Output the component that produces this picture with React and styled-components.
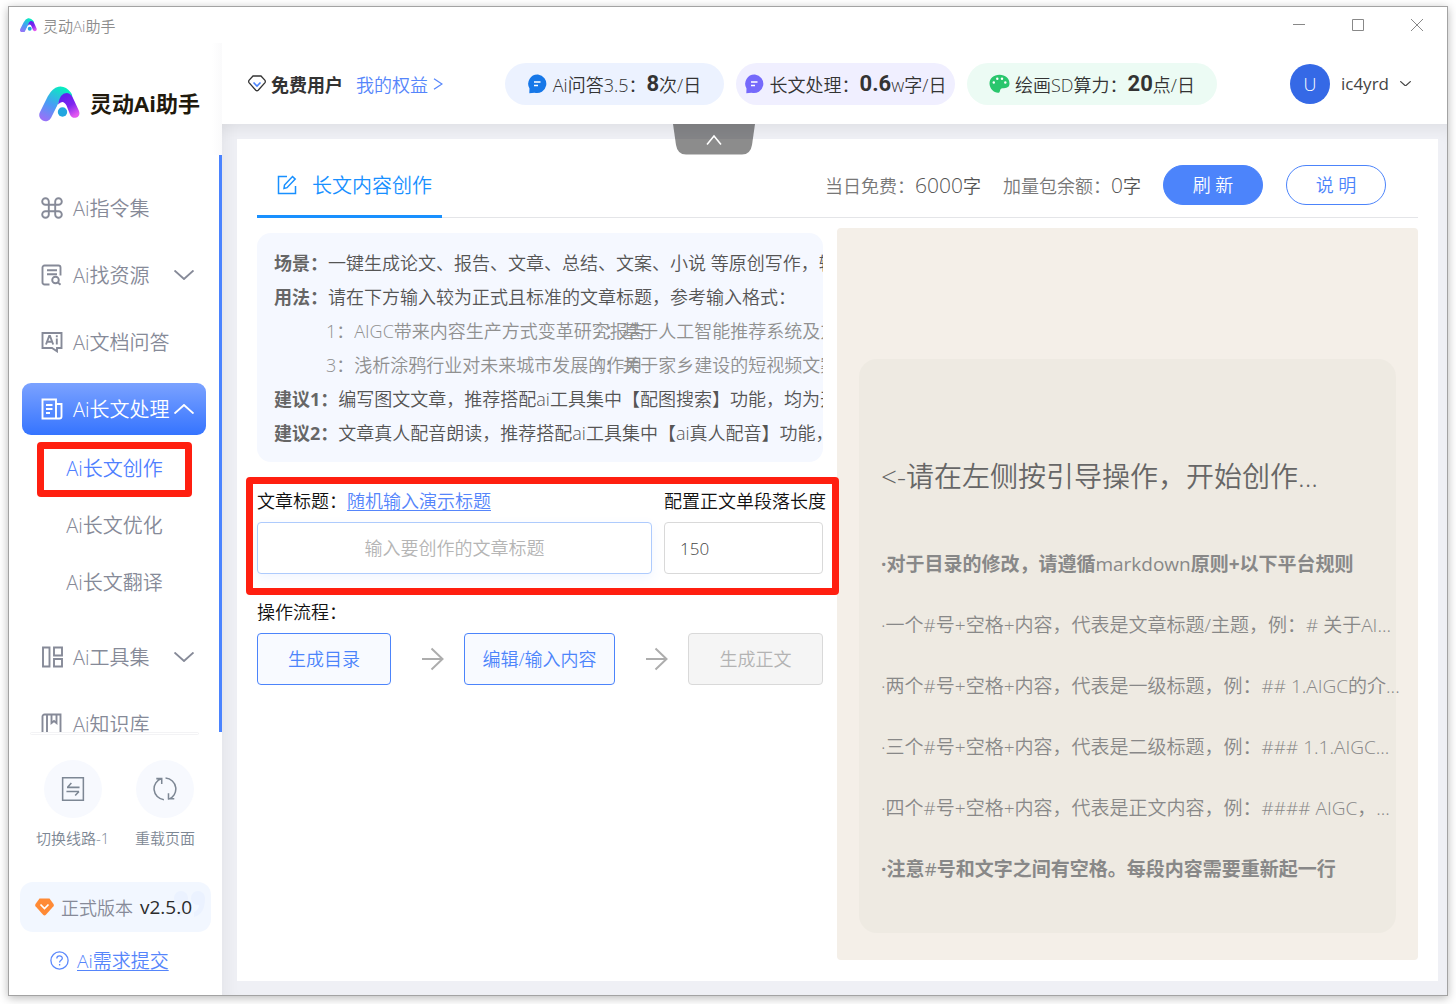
import React, { useState } from "react";
import styled, { createGlobalStyle, css } from "styled-components";

const GlobalStyle = createGlobalStyle`
  * { box-sizing: border-box; }
  body {
    margin: 0;
    background: #fff;
    color: #333;
    font-family: "Open Sans", "Noto Sans CJK SC", sans-serif;
    font-size: 18px;
    font-weight: 350;
  }
  button, input { font: inherit; color: inherit; }
  button { cursor: pointer; padding: 0; border: 0; background: none; white-space: nowrap; }
  p, h1, h2, ul { margin: 0; padding: 0; }
  ul { list-style: none; }
`

const Desktop = styled.div`
  min-height: 100vh;
  padding: 6px 8px 8px;
  display: flex;
`

const Window = styled.div`
  flex: 1;
  min-width: 0;
  display: flex;
  flex-direction: column;
  background: #fff;
  border: 1px solid #a3a3a3;
  box-shadow: 0 2px 9px rgba(0, 0, 0, 0.28);
`

/* title bar */
const TitleBar = styled.header`
  height: 36px;
  padding: 0 23px 0 11px;
  display: flex;
  align-items: center;
  justify-content: space-between;
  color: #8c8c8c;
  font-size: 15px;
`
const TitleName = styled.div`
  display: flex;
  align-items: center;
  gap: 6px;
`
const WindowButtons = styled.div`
  display: flex;
  gap: 44px;
`
const WindowButton = styled.button`
  width: 15px;
  height: 15px;
  display: flex;
  align-items: center;
  justify-content: center;
`

const Columns = styled.div`
  flex: 1;
  display: flex;
`

/* sidebar */
const Sidebar = styled.aside`
  width: 213px;
  flex: none;
  display: flex;
  flex-direction: column;
  color: #868a98;
`
const Brand = styled.div`
  height: 112px;
  padding: 10px 0 0 30px;
  display: flex;
  align-items: center;
  gap: 10px;
  background: linear-gradient(to left, #fafafb, #fff 10px);
`
const BrandName = styled.h1`
  color: #21190c;
  font-size: 22px;
  font-weight: 700;
  line-height: 28px;
  padding-bottom: 2px;
  white-space: nowrap;
`
const Menu = styled.nav`
  height: 577px;
  padding: 27px 13px 0;
  overflow: hidden;
  border-right: 3px solid #4a83ff;
  display: flex;
  flex-direction: column;
  gap: 15px;
`
const MenuItem = styled.button`
  width: 184px;
  height: 52px;
  flex: none;
  padding: 0 12px 0 19px;
  display: flex;
  align-items: center;
  border-radius: 9px;
  font-size: 20px;
  text-align: left;
  color: ${props => (props.$active ? "#fff" : "#868a98")};
  background: ${props => (props.$active ? "linear-gradient(#7ba2ff, #3574ff)" : "none")};

  span { flex: 1; margin-left: 10px; padding-bottom: 2px; }
  svg { flex: none; }
`
const SubMenu = styled.div`
  display: flex;
  flex-direction: column;
  padding: 4px 0 6px 15px;
`
const SubItem = styled.button`
  position: relative;
  width: 155px;
  height: 57px;
  font-size: 20px;
  color: ${props => (props.$marked ? "#4f80ff" : "#868a98")};

  ${props => props.$marked && css`
    &::after {
      content: "";
      position: absolute;
      inset: 3px 0 -1px;
      border: 7px solid #ff1f10;
      border-radius: 4px;
    }
  `}
`
const MenuLine = styled.div`
  height: 3px;
  margin: 0 23px 0 21px;
  border: 1px solid #f3f3f5;
  border-radius: 2px;
`
const Tools = styled.div`
  display: flex;
  justify-content: space-between;
  padding: 25px 27px 0;
`
const Tool = styled.button`
  display: flex;
  flex-direction: column;
  align-items: center;
  gap: 9px;
  font-size: 15px;
  line-height: 22px;
  color: #7d8794;
`
const ToolCircle = styled.span`
  width: 58px;
  height: 58px;
  border-radius: 50%;
  background: #f7f9fe;
  display: flex;
  align-items: center;
  justify-content: center;
`
const Version = styled.div`
  height: 50px;
  margin: 33px 11px 0 11px;
  padding: 0 15px;
  display: flex;
  align-items: center;
  gap: 7px;
  border-radius: 13px;
  position: relative;
  background: #f2f7ff;
  white-space: nowrap;

  b { color: #2b2b2b; font-weight: 500; font-size: 19px; position: relative; }
`
const Quote = styled.svg`
  position: absolute;
  right: 6px;
  top: 9px;
`
const Feedback = styled.div`
  height: 58px;
  padding: 0 0 2px 41px;
  display: flex;
  align-items: center;
  gap: 8px;
  color: #5b88fb;
  font-size: 19px;
`
const Link = styled.a`
  color: #5585fb;
  text-decoration: ${props => (props.$plain ? "none" : "underline")};
  text-underline-offset: 2px;
`

/* top bar */
const Page = styled.div`
  flex: 1;
  min-width: 0;
  display: flex;
  flex-direction: column;
`
const TopBar = styled.div`
  height: 81px;
  padding: 0 36px 0 26px;
  display: flex;
  align-items: center;
  white-space: nowrap;
`
const Plan = styled.div`
  width: 257px;
  display: flex;
  align-items: center;
  gap: 5px;

  b { font-weight: 700; margin-right: 8px; }
  a { display: flex; align-items: center; gap: 5px; }
`
const Pills = styled.div`
  display: flex;
  gap: 12px;
`
const Pill = styled.div`
  width: ${props => props.$width}px;
  height: 42px;
  display: flex;
  align-items: center;
  justify-content: center;
  border-radius: 21px;
  background: ${props => props.$color};

  svg { flex: none; margin-right: 5px; }
  b {
    font-family: Roboto, sans-serif;
    font-size: 22px;
    font-weight: 700;
  }
`
const User = styled.button`
  margin-left: auto;
  display: flex;
  align-items: center;
  gap: 11px;
  color: #444;
`
const Avatar = styled.span`
  width: 40px;
  height: 40px;
  border-radius: 50%;
  background: #3569e6;
  color: #fff;
  line-height: 40px;
`
const UserName = styled.span`
  font-size: 17px;
  font-weight: 400;
`

/* work area */
const Work = styled.main`
  position: relative;
  flex: 1;
  display: flex;
  padding: 15px 9px 14px 15px;
  background: #eff0f5;
  box-shadow: inset 0 14px 14px -8px rgba(0, 0, 0, 0.06), inset 14px 0 14px -8px rgba(0, 0, 0, 0.04);
`
const PullTab = styled.button`
  position: absolute;
  top: 0;
  left: 40%;
  width: 82px;
  height: 31px;
  margin-left: -39px;
`
const Panel = styled.div`
  flex: 1;
  min-width: 0;
  padding: 21px 20px;
  background: #fff;
  display: flex;
  flex-direction: column;
`
const PanelHead = styled.div`
  height: 58px;
  display: flex;
  border-bottom: 1px solid #e4e5e8;
`
const PanelTab = styled.button`
  width: 185px;
  height: 58px;
  padding: 0 0 6px 10px;
  display: flex;
  align-items: center;
  justify-content: center;
  gap: 15px;
  border-bottom: 3px solid #1890ff;
  color: #1890ff;
  font-size: 20px;
`
const Quota = styled.div`
  margin-left: auto;
  padding: 0 32px 8px 0;
  display: flex;
  align-items: center;
  white-space: nowrap;
  color: #777;
`
const Amount = styled.span`
  margin: 0 22px 0 0;
  color: #555;

  strong { font-size: 21px; font-weight: 350; }
`
const RoundButton = styled.button`
  width: 100px;
  height: 40px;
  margin-left: ${props => (props.$ghost ? 23 : 0)}px;
  padding-bottom: 2px;
  border: 1px solid #4c84fb;
  border-radius: 20px;
  background: ${props => (props.$ghost ? "#fff" : "#4c84fb")};
  color: ${props => (props.$ghost ? "#4c84fb" : "#fff")};
`
const PanelBody = styled.div`
  flex: 1;
  display: grid;
  grid-template-columns: 566fr 581fr;
  gap: 14px;
  padding-top: 10px;
`
const Left = styled.div`
  min-width: 0;
  padding-top: 5px;
`
const Tips = styled.section`
  height: 229px;
  padding: 13px 0 0 17px;
  overflow: hidden;
  border-radius: 14px;
  background: #f5f8ff;
  color: #555;
  line-height: 34px;
  white-space: nowrap;

  b { font-weight: 700; color: #666; }
`
const Examples = styled.div`
  display: grid;
  grid-template-columns: 268px 300px;
  padding-left: 52px;
  color: #909090;
`
const FormArea = styled.form`
  position: relative;
  display: grid;
  grid-template-columns: 1fr 159px;
  column-gap: 12px;
  padding: 24px 0 21px;
  margin-bottom: 2px;
  color: #111;

  /* red marker round the form */
  &::after {
    content: "";
    position: absolute;
    inset: 15px -16px 0 -11px;
    border: 7px solid #ff1f10;
    border-radius: 4px;
    pointer-events: none;
  }
`
const Caption = styled.div`
  height: 36px;
  line-height: 30px;
  color: #111;
  white-space: nowrap;
`
const Field = styled.input`
  width: 100%;
  min-width: 0;
  height: 52px;
  padding: 0 15px;
  border: 1px solid ${props => (props.$main ? "#aecbfd" : "#d9d9d9")};
  border-radius: 4px;
  background: #fff;
  color: #444;
  font-size: ${props => (props.$main ? 18 : 17)}px;
  text-align: ${props => (props.$main ? "center" : "left")};
  box-shadow: ${props => (props.$main ? "0 4px 12px rgba(80, 130, 255, 0.08)" : "none")};

  &::placeholder { color: #b5b5b5; opacity: 1; }
`
const Steps = styled.div`
  display: flex;
  justify-content: space-between;
  align-items: center;

  svg { margin-left: 11px; }
`
const StepButton = styled.button`
  width: ${props => props.$width}px;
  height: 52px;
  padding-bottom: 2px;
  border: 1px solid #4c84fb;
  border-radius: 4px;
  background: #f8faff;
  color: #4c84fb;

  &:disabled {
    border-color: #d9d9d9;
    background: #f5f5f5;
    color: #b3b3b3;
  }
`
const Preview = styled.section`
  min-width: 0;
  padding: 0 22px 27px;
  display: flex;
  flex-direction: column;
  justify-content: flex-end;
  border-radius: 4px;
  background: #f4efe8;
`
const Guide = styled.div`
  padding: 98px 0 33px 22px;
  border-radius: 18px;
  background: #eeeae2;
  color: #888;
  font-size: 19px;
  white-space: nowrap;

  h2 {
    height: 40px;
    margin-bottom: 37px;
    line-height: 38px;
    font-size: 28px;
    font-weight: 350;
    color: #666;
  }
`
const Rule = styled.li`
  line-height: 61px;
  font-weight: ${props => (props.$strong ? 700 : 350)};

  span { font-weight: 500; }
`

/* icons */
const Logo = ({ size = 41, id }) => (
  <svg width={size} height={size * 36 / 41} viewBox="0 0 41 36" fill="none">
    <defs>
      <linearGradient id={id + "a"} x1="24" y1="2" x2="7" y2="34" gradientUnits="userSpaceOnUse">
        <stop stopColor="#08edc0" />
        <stop offset="0.55" stopColor="#479df5" />
        <stop offset="1" stopColor="#9673f7" />
      </linearGradient>
      <linearGradient id={id + "b"} x1="25" y1="10" x2="37" y2="29" gradientUnits="userSpaceOnUse">
        <stop stopColor="#6320f0" />
        <stop offset="0.5" stopColor="#7d25ef" />
        <stop offset="1" stopColor="#e358f0" />
      </linearGradient>
    </defs>
    <path d="M6.500 29 14.500 13Q20.500 2 27 10.500" stroke={`url(#${id}a)`} strokeWidth="12.500" strokeLinecap="round" />
    <path d="M13 36Q16 24 19.500 18.500Q24 13 28 18.500L32 36z" fill="#fff" />
    <path d="M19 18.500Q21 7 27.500 7Q31 7 33.500 11L39.800 24.500C43 32 33 34.500 31 28.500L27.500 19.500Q24 13 19 18.500z" fill={`url(#${id}b)`} />
    <circle cx="23.500" cy="26" r="4.700" fill="#22a6df" />
  </svg>
)
const Chevron = ({ up, width = 20, stroke = 1.9 }) => (
  <svg width={width} height={width / 2} viewBox="0 0 20 10" fill="none" stroke="currentColor" strokeWidth={stroke}>
    <path d={up ? "M.5 9.500 10 1l9.500 8.500" : "M.5.5 10 9l9.500-8.500"} />
  </svg>
)
const Icon = ({ size = 22, children, ...rest }) => (
  <svg width={size} height={size} viewBox="0 0 22 22" fill="none" stroke="currentColor" strokeWidth="1.900" {...rest}>
    {children}
  </svg>
)
const CommandIcon = () => (
  <Icon><path d="M7.800 7.800h6.400v6.400H7.800zM7.800 7.800H4.500A3.300 3.300 0 1 1 7.800 4.500zM14.200 7.800V4.500a3.300 3.300 0 1 1 3.300 3.300zM14.200 14.200h3.300a3.300 3.300 0 1 1-3.300 3.300zM7.800 14.200v3.300a3.300 3.300 0 1 1-3.300-3.300z" /></Icon>
)
const SearchDocIcon = () => (
  <Icon>
    <path d="M8.500 20.500h-5a2 2 0 0 1-2-2v-15a2 2 0 0 1 2-2h14a2 2 0 0 1 2 2v8M6 6.300h10M6 10.300h10" />
    <circle cx="14.500" cy="16" r="3.300" />
    <path d="m17 18.500 2.500 2.200" />
  </Icon>
)
const AiDocIcon = () => (
  <Icon>
    <path d="M1.500 2h19v15h-4.500v3.300L11 17H1.500z" />
    <path d="m5 13.500 3.200-8.500h.8l3.200 8.500M6.300 10.800h4.800M15.800 7.500v6M15.800 4.300v1.900" />
  </Icon>
)
const ArticleIcon = () => (
  <Icon><path d="M1.500 1.500h13.500v19h-13.500zM15 6h5.500v12.500a2 2 0 0 1-2 2H15M5 7h6.500M5 11h6.500M5 15h4" /></Icon>
)
const ToolsIcon = () => (
  <Icon><path d="M2 1.500h6.500v19H2zM13 1.500h8v8h-8zM13 13h8v7.500h-8z" /></Icon>
)
const BookIcon = () => (
  <Icon><path d="M1.500 22V3.500a2 2 0 0 1 2-2h16V22M6 1.500V22M10.500 1.500V10l2.500-2 2.500 2V1.500" /></Icon>
)
const SwitchIcon = () => (
  <Icon size={24} strokeWidth="1.400">
    <path d="M1.500.7h19v20.600h-19zM5.500 9.500h11.500M6 9.500 9.500 5.500M16.500 13.300H5M16.500 13.300 13 17" />
  </Icon>
)
const ReloadIcon = () => (
  <Icon size={24} strokeWidth="1.400">
    <path d="M8 1.300A10 10 0 0 0 10 20.800M14 20.500A10 10 0 0 0 11.500 1M3 1.500h5v5M19.500 20h-5.300v-5" />
  </Icon>
)
const ChatIcon = ({ color }) => (
  <svg width="20" height="20" viewBox="0 0 20 20">
    <path d="M10 .5a9.300 9.300 0 1 1-3.500 18.200L1.300 19.300 1.500 14.500A9.300 9.300 0 0 1 10 .5z" fill={color} />
    <path d="M6 8h6.500M6 11.500h4" stroke="#fff" strokeWidth="1.500" />
  </svg>
)
const PaletteIcon = () => (
  <svg width="21" height="20" viewBox="0 0 21 20">
    <path d="M10.500.8C4.500.8.5 4.500.5 9.500S5 18.800 9 18.800c3 0 1-4.600 4.500-4.600 4 0 7-.7 7-4.700C20.500 4.500 16.500.8 10.500.8z" fill="#2ac66d" />
    <g fill="#fff">
      <circle cx="4.800" cy="8.500" r="1.200" /><circle cx="8.300" cy="4.800" r="1.200" />
      <circle cx="13" cy="4.800" r="1.200" /><circle cx="16.300" cy="8.500" r="1.200" />
    </g>
  </svg>
)
const Arrow = () => (
  <svg width="22" height="24" viewBox="0 0 22 24" fill="none" stroke="#adadad" strokeWidth="2">
    <path d="M0 12h20.500M9.500 1.500 20.500 12 9.500 22.500" />
  </svg>
)

const examples = [
  "1：AIGC带来内容生产方式变革研究报告",
  "2：基于人工智能推荐系统及方法研究",
  "3：浅析涂鸦行业对未来城市发展的作用",
  "4：关于家乡建设的短视频文案创作",
]

const rules = [
  "·一个#号+空格+内容，代表是文章标题/主题，例：# 关于AI...",
  "·两个#号+空格+内容，代表是一级标题，例：## 1.AIGC的介...",
  "·三个#号+空格+内容，代表是二级标题，例：### 1.1.AIGC...",
  "·四个#号+空格+内容，代表是正文内容，例：#### AIGC，...",
]

function SideBar() {
  return (
    <Sidebar>
      <Brand>
        <Logo id="brand" />
        <BrandName>灵动Ai助手</BrandName>
      </Brand>
      <Menu>
        <MenuItem><CommandIcon /><span>Ai指令集</span></MenuItem>
        <MenuItem><SearchDocIcon /><span>Ai找资源</span><Chevron /></MenuItem>
        <MenuItem><AiDocIcon /><span>Ai文档问答</span></MenuItem>
        <div>
          <MenuItem $active><ArticleIcon /><span>Ai长文处理</span><Chevron up /></MenuItem>
          <SubMenu>
            <SubItem $marked>Ai长文创作</SubItem>
            <SubItem>Ai长文优化</SubItem>
            <SubItem>Ai长文翻译</SubItem>
          </SubMenu>
        </div>
        <MenuItem><ToolsIcon /><span>Ai工具集</span><Chevron /></MenuItem>
        <MenuItem><BookIcon /><span>Ai知识库</span></MenuItem>
      </Menu>
      <MenuLine />
      <Tools>
        <Tool><ToolCircle><SwitchIcon /></ToolCircle>切换线路-1</Tool>
        <Tool><ToolCircle><ReloadIcon /></ToolCircle>重载页面</Tool>
      </Tools>
      <Version>
        <Quote width="31" height="26" viewBox="0 0 31 26" fill="#ebf2ff">
          <path d="M0 7a7 7 0 0 1 14 0c0 10-3 17-11 19v-5c3-1 5-4 5-7-5 0-8-3-8-7zM17 7a7 7 0 0 1 14 0c0 10-3 17-11 19v-5c3-1 5-4 5-7-5 0-8-3-8-7z" />
        </Quote>
        <svg width="19" height="18" viewBox="0 0 19 18" fill="none">
          <path d="M4.500.5h10L18.500 6c.5 1 .5 1.500 0 2.300l-7.600 8.500c-1 1-1.800 1-2.800 0L.5 8.300C0 7.500 0 7 .5 6z" fill="#ff8a35" />
          <path d="m5.500 6.500 4 4 4-4" stroke="#fff" strokeWidth="1.700" />
        </svg>
        <span>正式版本</span>
        <b>v2.5.0</b>
      </Version>
      <Feedback>
        <svg width="19" height="19" viewBox="0 0 19 19" fill="none" stroke="currentColor" strokeWidth="1.300">
          <circle cx="9.500" cy="9.500" r="8.600" />
          <path d="M6.800 7.500c0-3.500 5.500-3.500 5.500-.3 0 2-2.700 2-2.700 4.200M9.600 13v1.500" />
        </svg>
        <Link href="#feedback">Ai需求提交</Link>
      </Feedback>
    </Sidebar>
  )
}

function Header() {
  return (
    <TopBar>
      <Plan>
        <svg width="18" height="17" viewBox="0 0 18 17" fill="none" strokeWidth="1.300">
          <path d="M5 1h8l4 4.300c.5 1 .4 1.600 0 2.300l-6.800 7.600c-.8.8-1.600.8-2.400 0L1 7.600c-.5-.7-.5-1.300 0-2.300z" stroke="#333" />
          <path d="m5.500 7.500 3.500 3.500 3.500-3.500" stroke="#4c84fb" strokeWidth="1.600" />
        </svg>
        <b>免费用户</b>
        <Link $plain href="#rights">
          我的权益
          <svg width="10" height="12" viewBox="0 0 10 12" fill="none" stroke="currentColor" strokeWidth="1.300">
            <path d="m1 .7 8 5.300-8 5.300" />
          </svg>
        </Link>
      </Plan>
      <Pills>
        <Pill $width={219} $color="#ecf2ff"><ChatIcon color="#1677e8" />Ai问答3.5：<b>8</b>次/日</Pill>
        <Pill $width={219} $color="#f0efff"><ChatIcon color="#7569fb" />长文处理：<b>0.6</b>w字/日</Pill>
        <Pill $width={250} $color="#ecfbf4"><PaletteIcon />绘画SD算力：<b>20</b>点/日</Pill>
      </Pills>
      <User>
        <Avatar>U</Avatar>
        <UserName>ic4yrd</UserName>
        <Chevron width={11} stroke={2.2} />
      </User>
    </TopBar>
  )
}

function Writer() {
  const [title, setTitle] = useState("")
  const [length, setLength] = useState("150")

  return (
    <Left>
      <Tips>
        <p><b>场景：</b>一键生成论文、报告、文章、总结、文案、小说 等原创写作，输入标题即可</p>
        <p><b>用法：</b>请在下方输入较为正式且标准的文章标题，参考输入格式：</p>
        <Examples>
          {examples.map(text => <span key={text}>{text}</span>)}
        </Examples>
        <p><b>建议1：</b>编写图文文章，推荐搭配ai工具集中【配图搜索】功能，均为开源图片</p>
        <p><b>建议2：</b>文章真人配音朗读，推荐搭配ai工具集中【ai真人配音】功能，逼真自然</p>
      </Tips>
      <FormArea>
        <Caption>
          <label htmlFor="title">文章标题：</label>
          <Link href="#random">随机输入演示标题</Link>
        </Caption>
        <Caption as="label" htmlFor="length">配置正文单段落长度</Caption>
        <Field $main id="title" placeholder="输入要创作的文章标题" value={title} onChange={e => setTitle(e.target.value)} />
        <Field id="length" value={length} onChange={e => setLength(e.target.value)} />
      </FormArea>
      <Caption>操作流程：</Caption>
      <Steps>
        <StepButton $width={134}>生成目录</StepButton>
        <Arrow />
        <StepButton $width={151}>编辑/输入内容</StepButton>
        <Arrow />
        <StepButton $width={135} disabled>生成正文</StepButton>
      </Steps>
    </Left>
  )
}

export default function App() {
  return (
    <Desktop>
      <GlobalStyle />
      <Window>
        <TitleBar>
          <TitleName><Logo size={17} id="small" />灵动Ai助手</TitleName>
          <WindowButtons>
            <WindowButton aria-label="最小化">
              <svg width="12" height="12" stroke="#888"><path d="M0 5.500h12" /></svg>
            </WindowButton>
            <WindowButton aria-label="最大化">
              <svg width="12" height="12" stroke="#888" fill="none"><path d="M.5.5h11v11H.5z" /></svg>
            </WindowButton>
            <WindowButton aria-label="关闭">
              <svg width="12" height="12" stroke="#888"><path d="m0 0 12 12M12 0 0 12" /></svg>
            </WindowButton>
          </WindowButtons>
        </TitleBar>
        <Columns>
          <SideBar />
          <Page>
            <Header />
            <Work>
              <Panel>
                <PanelHead>
                  <PanelTab>
                    <svg width="20" height="20" viewBox="0 0 20 20" fill="none" stroke="currentColor" strokeWidth="1.500">
                      <path d="M10 1.500H1.500v17h17V11M7 13.500l.5-3.500L15.500 1.500l2.700 2.600L10 12.700z" />
                    </svg>
                    长文内容创作
                  </PanelTab>
                  <Quota>
                    当日免费：
                    <Amount><strong>6000</strong>字</Amount>
                    加量包余额：
                    <Amount><strong>0</strong>字</Amount>
                    <RoundButton>刷 新</RoundButton>
                    <RoundButton $ghost>说 明</RoundButton>
                  </Quota>
                </PanelHead>
                <PanelBody>
                  <Writer />
                  <Preview>
                    <Guide>
                      <h2>&lt;-请在左侧按引导操作，开始创作...</h2>
                      <ul>
                        <Rule $strong>·对于目录的修改，请遵循<span>markdown</span>原则+以下平台规则</Rule>
                        {rules.map(text => <Rule key={text}>{text}</Rule>)}
                        <Rule $strong>·注意<span>#</span>号和文字之间有空格。每段内容需要重新起一行</Rule>
                      </ul>
                    </Guide>
                  </Preview>
                </PanelBody>
              </Panel>
              <PullTab aria-label="收起">
                <svg width="82" height="31" viewBox="0 0 82 31" fill="none">
                  <path d="M0 0h82l-3 21q-1.500 9.500-10 9.500H13Q4.500 30.500 3 21z" fill="#000" fillOpacity="0.450" />
                  <path d="m34 20.500 7-8.500 7 8.500" stroke="#fff" strokeWidth="1.600" />
                </svg>
              </PullTab>
            </Work>
          </Page>
        </Columns>
      </Window>
    </Desktop>
  )
}
